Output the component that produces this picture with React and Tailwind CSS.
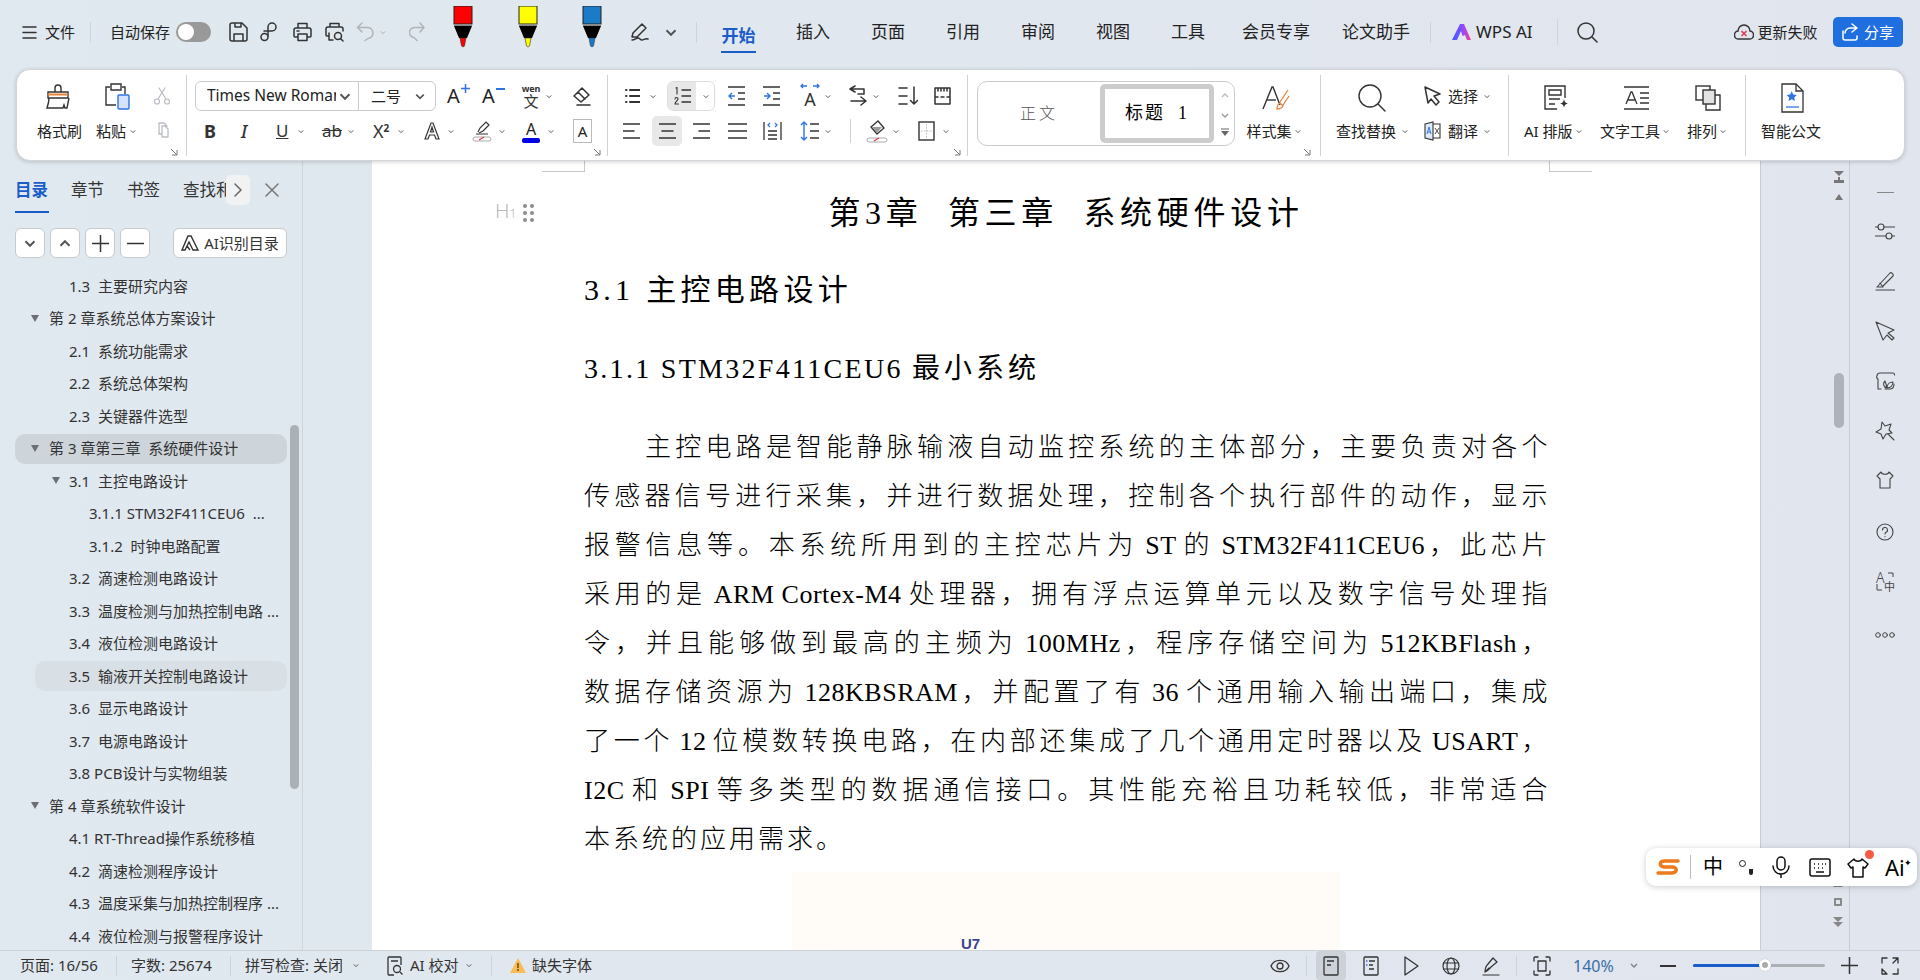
import React from "react";

const S = ({ className = "", children, sw = 1.5, vb = "0 0 24 24", fill = "none" }) => (
  <svg viewBox={vb} fill={fill} stroke="currentColor" strokeWidth={sw} strokeLinecap="round" strokeLinejoin="round" className={"shrink-0 block " + className}>{children}</svg>
);
const Chev = ({ className = "" }) => (
  <svg viewBox="0 0 8 5" fill="none" stroke="#555" strokeWidth="1.3" className={"shrink-0 block w-[8px] h-[5px] " + className}><path d="M1 1l3 3 3-3" /></svg>
);
const Corner = ({ className = "" }) => (
  <svg viewBox="0 0 8 8" fill="none" stroke="#777" strokeWidth="1" className={"absolute w-[8px] h-[8px] " + className}><path d="M1 1l5.5 5.5M2 7h5V2" /></svg>
);
const Sep = ({ className = "" }) => <div className={"w-px bg-[#cfd3d8] shrink-0 " + className} />;

const Marker = ({ c, className = "" }) => (
  <svg viewBox="0 0 22 42" className={"shrink-0 block w-[22px] h-[42px] " + className}>
    <rect x="2" y="0" width="18" height="18" fill={c} stroke="#222" strokeWidth="1" />
    <rect x="2" y="18" width="18" height="2" fill="#888" />
    <path d="M2 20h18l-5 12H7z" fill="#000" />
    <path d="M8 32h6l-1.5 8-1.5 1-1.5-1z" fill={c} stroke="#333" strokeWidth="0.6" />
  </svg>
);

const Row = ({ t, x, tri, triX, sel, hov }) => (
  <div className={"h-[30px] mb-[2.5px] relative flex items-center rounded-[10px] whitespace-pre " + (sel ? "bg-[#cdd5da] " : "") + (hov ? "bg-[#d8e0e6] ml-[20px] " : "") + x}>
    {tri && <span className={"absolute w-0 h-0 border-l-[4px] border-r-[4px] border-t-[7px] border-l-transparent border-r-transparent border-t-[#6b6f73] " + triX} />}
    {t}
  </div>
);

const bodyLines = [
  "传感器信号进行采集，并进行数据处理，控制各个执行部件的动作，显示",
  "报警信息等。本系统所用到的主控芯片为 ST 的 STM32F411CEU6，此芯片",
  "采用的是 ARM Cortex-M4 处理器，拥有浮点运算单元以及数字信号处理指",
  "令，并且能够做到最高的主频为 100MHz，程序存储空间为 512KBFlash，",
  "数据存储资源为 128KBSRAM，并配置了有 36 个通用输入输出端口，集成",
  "了一个 12 位模数转换电路，在内部还集成了几个通用定时器以及 USART，",
  "I2C 和 SPI 等多类型的数据通信接口。其性能充裕且功耗较低，非常适合",
];

export default function App() {
  return (
    <div lang="zh-CN" className="relative w-[1920px] h-[980px] overflow-hidden flex flex-col bg-[linear-gradient(90deg,#e0e9ef,#e1e5ee)] text-[15px] text-[#222] font-['Noto_Sans','Noto_Sans_CJK_SC',sans-serif]">
      {/* top bar */}
      <div className="h-[69px] flex items-center shrink-0 pb-[5px]">
        <S className="w-[15px] h-[15px] ml-[22px] text-[#333]" vb="0 0 15 15"><path d="M1 2h13M1 7.5h13M1 13h13" /></S>
        <span className="ml-[8px]">文件</span>
        <Sep className="h-[21px] ml-[15px]" />
        <span className="ml-[19px]">自动保存</span>
        <div className="ml-[6px] w-[35px] h-[20px] rounded-full bg-[#999] flex items-center pl-[2px]"><div className="w-[16px] h-[16px] rounded-full bg-white" /></div>
        <S className="w-[19px] h-[20px] ml-[18px] text-[#333]" vb="0 0 19 20"><path d="M3 1h10l5 5v11a2 2 0 0 1-2 2H3a2 2 0 0 1-2-2V3a2 2 0 0 1 2-2zM6 1v4h6V1M5 19v-7h9v7" /></S>
        <S className="w-[19px] h-[20px] ml-[12px] text-[#333]" vb="0 0 19 20"><path d="M8 14V5a4 4 0 1 1 4 4H4" /><circle cx="4.500" cy="15" r="3.500" /></S>
        <S className="w-[19px] h-[20px] ml-[14px] text-[#333]" vb="0 0 19 20"><path d="M5 6V1.500h9V6M4 15H2a1 1 0 0 1-1-1V8a2 2 0 0 1 2-2h13a2 2 0 0 1 2 2v6a1 1 0 0 1-1 1h-2M5 12h9v6.500H5zM4 9h2" /></S>
        <S className="w-[19px] h-[20px] ml-[13px] text-[#333]" vb="0 0 19 20"><path d="M5 5V1.500h9V5M4 14H2a1 1 0 0 1-1-1V7a2 2 0 0 1 2-2h13a2 2 0 0 1 2 2v2M4 11v7h4" /><circle cx="13" cy="14" r="3.500" /><path d="M15.500 16.500L18 19" /></S>
        <S className="w-[18px] h-[20px] ml-[12px] text-[#b0b4b9]" vb="0 0 18 20"><path d="M6 1L1.500 5.500 6 10M1.500 5.500H11a5.500 5.500 0 0 1 1 11l-3 2" /></S>
        <Chev className="ml-[5px] opacity-40 scale-75" />
        <S className="w-[16px] h-[20px] ml-[22px] text-[#b0b4b9]" vb="0 0 16 20"><path d="M11 1l4 4.500L11 10M15 5.500H6a5 5 0 0 0-1 10l3 3" /></S>
        <Marker c="#ff0000" className="ml-[27px] mt-[-10px]" />
        <Marker c="#ffff00" className="ml-[43px] mt-[-10px]" />
        <Marker c="#1b7bc9" className="ml-[42px] mt-[-10px]" />
        <S className="w-[20px] h-[20px] ml-[27px] text-[#333]" vb="0 0 20 20"><path d="M2 15l1-4L12 2l4 4-9 9zM2 18c3 0 4-2 6-2s2 2 4 2 3-2 6-1" /></S>
        <Chev className="ml-[17px] scale-150" />
        <Sep className="h-[21px] ml-[21px]" />
        <div className="flex flex-col items-center ml-[24px] w-[35px] h-[48px] relative justify-center">
          <span className="text-[17px] leading-[32px] mt-[9px] font-bold text-[#1a5dc8]">开始</span>
          <div className="h-[2px] w-[35px] bg-[#1a5dc8] mt-[-1px]" />
        </div>
        <span className="text-[17px] ml-[40px] w-[35px] whitespace-nowrap">插入</span>
        <span className="text-[17px] ml-[40px] w-[35px] whitespace-nowrap">页面</span>
        <span className="text-[17px] ml-[40px] w-[35px] whitespace-nowrap">引用</span>
        <span className="text-[17px] ml-[40px] w-[35px] whitespace-nowrap">审阅</span>
        <span className="text-[17px] ml-[40px] w-[35px] whitespace-nowrap">视图</span>
        <span className="text-[17px] ml-[40px] w-[35px] whitespace-nowrap">工具</span>
        <span className="text-[17px] ml-[36px] w-[68px] whitespace-nowrap">会员专享</span>
        <span className="text-[17px] ml-[32px] w-[68px] whitespace-nowrap">论文助手</span>
        <Sep className="h-[21px] ml-[20px]" />
        <svg viewBox="0 0 20 16" className="w-[20px] h-[16px] ml-[20px] shrink-0">
          <defs><linearGradient id="wa" x1="0" x2="1"><stop offset="0" stopColor="#3a5cff" /><stop offset="0.55" stopColor="#8a4cff" /><stop offset="1" stopColor="#ff3b8e" /></linearGradient></defs>
          <path d="M9 0h4l7 16h-4l-2-5-2.500 1L10 7 6 16H1z" fill="url(#wa)" />
        </svg>
        <span className="ml-[5px] text-[17px]">WPS AI</span>
        <Sep className="h-[26px] ml-[24px]" />
        <S className="w-[21px] h-[21px] ml-[19px] text-[#333]" vb="0 0 21 21"><circle cx="9" cy="9" r="8" /><path d="M15 15l5 5" /></S>
        <svg viewBox="0 0 20 18" fill="none" className="w-[20px] h-[18px] ml-[136px] shrink-0"><path d="M5 16a4 4 0 0 1-1-8 6 6 0 0 1 12 0 4 4 0 0 1-1 8z" stroke="#333" strokeWidth="1.500" /><path d="M7.500 8l5 5M12.500 8l-5 5" stroke="#e0384f" strokeWidth="1.500" /></svg>
        <span className="ml-[4px] whitespace-nowrap">更新失败</span>
        <div className="ml-[15px] w-[70px] h-[30px] rounded-[5px] bg-[#1f6fe0] text-white flex items-center justify-center gap-[5px]">
          <S className="w-[18px] h-[18px] text-white" vb="0 0 18 18"><path d="M11 1l5 4-5 4M16 5H9a5 5 0 0 0-5 5v0M2 8v7a2 2 0 0 0 2 2h10a2 2 0 0 0 2-2v-2" /></S>
          <span className="whitespace-nowrap">分享</span>
        </div>
      </div>

      {/* ribbon */}
      <div className="relative z-10 ml-[16px] w-[1889px] h-[92px] shrink-0 bg-white rounded-[14px] border border-[#d2d5d9] shadow-[0_1px_4px_rgba(0,0,0,0.18)] flex pt-[5px] pb-[4px] text-[#222]">
        {/* G1 */}
        <div className="relative w-[169px] shrink-0">
          <div className="flex h-[30px] mt-[6px] items-center">
            <svg viewBox="0 0 26 26" fill="none" className="w-[26px] h-[26px] ml-[28px] shrink-0" stroke="#333" strokeWidth="1.400"><path d="M10 9V5a3 3 0 0 1 6 0v4" /><path d="M3 9h20v6H3z" /><path d="M3 11.500h20" stroke="#e8833a" strokeWidth="2" /><path d="M4 15c0 4-1 7-2 10h16l1-3 1 3h2l2-10" /></svg>
            <svg viewBox="0 0 26 28" fill="none" className="w-[26px] h-[28px] ml-[33px] shrink-0"><path d="M6 5H2v18h10M18 5h3v7" stroke="#333" strokeWidth="1.400" /><path d="M7 2h10v6H7z" stroke="#333" strokeWidth="1.400" /><rect x="14" y="13" width="11" height="14" rx="1" fill="#d4e3fb" stroke="#2f74e0" strokeWidth="1.400" /></svg>
            <S className="w-[18px] h-[18px] ml-[23px] text-[#b9bdc2]" vb="0 0 18 18" sw={1.200}><circle cx="4" cy="14.500" r="2.500" /><circle cx="14" cy="14.500" r="2.500" /><path d="M5 12L12 1M13 12L6 1" /></S>
          </div>
          <div className="flex h-[30px] mt-[5px] items-center">
            <span className="ml-[20px] w-[44px] whitespace-nowrap">格式刷</span>
            <span className="ml-[15px] w-[30px] whitespace-nowrap">粘贴</span>
            <Chev className="ml-[3px] scale-75" />
            <S className="w-[18px] h-[18px] ml-[19px] text-[#b9bdc2]" vb="0 0 18 18" sw={1.300}><path d="M6 4h3l3 3v8H6zM3 1h5l3 3M3 1v11h3" /></S>
          </div>
          <Corner className="right-[8px] bottom-[0px]" />
        </div>
        <Sep />
        {/* G2 */}
        <div className="relative w-[420px] shrink-0">
          <div className="flex h-[30px] mt-[6px] items-center">
            <div className="ml-[8px] w-[241px] h-[30px] rounded-[6px] border border-[#c8cbcf] flex items-center shrink-0">
              <div className="w-[163px] h-full border-r border-[#c8cbcf] flex items-center pl-[11px] shrink-0">
                <span className="w-[129px] overflow-hidden whitespace-nowrap text-[15.500px]">Times New Roman</span>
                <Chev className="ml-[5px] scale-150" />
              </div>
              <span className="ml-[12px] text-[15px] whitespace-nowrap">二号</span>
              <Chev className="ml-[15px] scale-125" />
            </div>
            <div className="relative ml-[11px] text-[20px] leading-[30px] w-[20px] shrink-0">A<svg viewBox="0 0 9 9" className="absolute top-[3px] right-[-3px] w-[9px] h-[9px]" stroke="#2f74e0" strokeWidth="1.500"><path d="M0 4.500h9M4.500 0v9" /></svg></div>
            <div className="relative ml-[15px] text-[20px] leading-[30px] w-[20px] shrink-0">A<svg viewBox="0 0 9 2" className="absolute top-[7px] right-[-3px] w-[9px] h-[2px]" stroke="#2f74e0" strokeWidth="2"><path d="M0 1h9" /></svg></div>
            <div className="ml-[18px] w-[22px] shrink-0 flex flex-col items-center text-[#333]">
              <span className="text-[9px] leading-[10px] font-bold tracking-tight">wen</span>
              <span className="text-[15px] leading-[15px]">文</span>
            </div>
            <Chev className="ml-[3px] scale-75" />
            <S className="w-[20px] h-[20px] ml-[19px] text-[#333]" vb="0 0 20 20"><path d="M2 10l8-8 7 7-8 7zM5 19h13M6 6l7 7" /></S>
          </div>
          <div className="flex h-[30px] mt-[5px] items-center">
            <span className="ml-[17px] w-[12px] font-bold text-[18px] text-[#333]">B</span>
            <span className="ml-[22px] w-[12px] italic text-[18px] text-[#333] text-center font-medium">I</span>
            <span className="ml-[26px] w-[12px] underline text-[17px] text-[#333]">U</span>
            <Chev className="ml-[9px] scale-75" />
            <span className="ml-[17px] w-[18px] line-through text-[17px] text-[#333]">ab</span>
            <Chev className="ml-[7px] scale-75" />
            <span className="ml-[18px] w-[19px] text-[18px] text-[#333] whitespace-nowrap">X<span className="text-[10px] font-bold align-[6px]">2</span></span>
            <Chev className="ml-[5px] scale-75" />
            <svg viewBox="0 0 16 20" className="w-[16px] h-[20px] ml-[19px] shrink-0" fill="none" stroke="#333" strokeWidth="1.200"><path d="M1 18L7 2h2l6 16h-3l-1.500-4h-5L4 18zM6.500 11L8 6l1.500 5z" /></svg>
            <Chev className="ml-[7px] scale-75" />
            <svg viewBox="0 0 20 22" fill="none" className="w-[20px] h-[22px] ml-[17px] shrink-0"><path d="M6 12l2-4 6-6 3 3-6 6-4 2" stroke="#333" strokeWidth="1.200" /><path d="M4 14h12" stroke="#333" /><rect x="1" y="17" width="18" height="4" rx="2" stroke="#aaa" /><path d="M7 20l5-3" stroke="#e0384f" strokeWidth="1.200" /></svg>
            <Chev className="ml-[6px] scale-75" />
            <div className="ml-[16px] w-[18px] flex flex-col items-center shrink-0">
              <span className="text-[16px] leading-[18px] text-[#222]">A</span>
              <div className="w-[18px] h-[5px] rounded-[2px] bg-[#0000e6]" />
            </div>
            <Chev className="ml-[7px] scale-75" />
            <div className="ml-[18px] w-[19px] h-[24px] border border-[#bbb] flex items-center justify-center text-[15px] shrink-0">A</div>
          </div>
          <Corner className="right-[6px] bottom-[0px]" />
        </div>
        <Sep />
        {/* G3 */}
        <div className="relative w-[359px] shrink-0 text-[#333]">
          <div className="flex h-[30px] mt-[6px] items-center">
            <S className="w-[15px] h-[16px] ml-[17px]" vb="0 0 15 16"><path d="M5 2h10M5 8h10M5 14h10M1 2h.5M1 8h.5M1 14h.5" strokeWidth="2" /></S>
            <Chev className="ml-[9px] scale-75" />
            <div className="ml-[10px] w-[48px] h-[30px] rounded-[6px] border border-[#dcdcdc] flex items-center shrink-0 overflow-hidden">
              <div className="w-[28px] h-full bg-[#e8e8e8] flex items-center justify-center"><S className="w-[17px] h-[18px]" vb="0 0 17 18"><path d="M8 3h9M8 9h9M8 15h9" /><path d="M2 1l1-.5V7M1 12a1.500 1.500 0 0 1 3 0c0 1.500-3 2.500-3 5h3.500" strokeWidth="1.100" /></S></div>
              <Chev className="ml-[6px] scale-75" />
            </div>
            <svg viewBox="0 0 17 20" fill="none" className="w-[17px] h-[20px] ml-[13px] shrink-0"><path d="M0 1h17M0 19h17M10 7h7M10 13h7" stroke="#333" strokeWidth="1.400" /><path d="M7 10H1M4 7l-3 3 3 3" stroke="#2f74e0" strokeWidth="1.400" /></svg>
            <svg viewBox="0 0 17 20" fill="none" className="w-[17px] h-[20px] ml-[18px] shrink-0"><path d="M0 1h17M0 19h17M10 7h7M10 13h7" stroke="#333" strokeWidth="1.400" /><path d="M1 10h6M4 7l3 3-3 3" stroke="#2f74e0" strokeWidth="1.400" /></svg>
            <div className="ml-[20px] w-[20px] relative h-[26px] shrink-0 flex items-end justify-center text-[18px] leading-[19px]">
              A
              <svg viewBox="0 0 20 6" fill="none" className="absolute top-0 left-0 w-[20px] h-[6px]" stroke="#2f74e0" strokeWidth="1.300"><path d="M1 3h6M3 1L1 3l2 2M13 3h6M17 1l2 2-2 2" /></svg>
            </div>
            <Chev className="ml-[4px] scale-75" />
            <S className="w-[19px] h-[22px] ml-[17px]" vb="0 0 19 22"><path d="M1 4h14M6 1L1 4l5 3M2 16h15M12 12l5 4-5 4M15 4v5H9" /></S>
            <Chev className="ml-[4px] scale-75" />
            <S className="w-[20px] h-[20px] ml-[18px]" vb="0 0 20 20"><path d="M1 2h8M1 10h8M1 18h8M16 1v17M12.500 14.500L16 18l3.500-3.500" /></S>
            <S className="w-[17px] h-[18px] ml-[16px]" vb="0 0 17 18"><path d="M1 1h15M1 1v16h15V1M4 1v3M7 1v3M10 1v3M13 1v3M1 10h3M7 10h3M13 10h3" /></S>
          </div>
          <div className="flex h-[30px] mt-[5px] items-center">
            <S className="w-[17px] h-[16px] ml-[15px]" vb="0 0 17 16"><path d="M0 1h17M0 8h11M0 15h17" /></S>
            <div className="ml-[12px] w-[30px] h-[30px] rounded-[5px] bg-[#e8e8e8] flex items-center justify-center shrink-0"><S className="w-[17px] h-[16px]" vb="0 0 17 16"><path d="M0 1h17M3 8h11M0 15h17" /></S></div>
            <S className="w-[17px] h-[16px] ml-[11px]" vb="0 0 17 16"><path d="M0 1h17M6 8h11M0 15h17" /></S>
            <S className="w-[19px] h-[16px] ml-[18px]" vb="0 0 19 16"><path d="M0 1h19M0 8h19M0 15h19" /></S>
            <svg viewBox="0 0 19 20" fill="none" className="w-[19px] h-[20px] ml-[16px] shrink-0" strokeWidth="1.300"><path d="M1 1v18M18 1v18M5 10h9M5 14h9M5 18h9" stroke="#333" /><path d="M7 2L5 4l2 2M12 2l2 2-2 2" stroke="#2f74e0" /></svg>
            <svg viewBox="0 0 20 20" fill="none" className="w-[20px] h-[20px] ml-[18px] shrink-0" strokeWidth="1.400"><path d="M4 1v18M1 4l3-3 3 3M1 16l3 3 3-3" stroke="#2f74e0" /><path d="M10 3h9M10 10h9M10 17h9" stroke="#333" /></svg>
            <Chev className="ml-[4px] scale-75" />
            <Sep className="h-[24px] ml-[18px]" />
            <svg viewBox="0 0 22 24" fill="none" className="w-[22px] h-[24px] ml-[15px] shrink-0"><path d="M5 8l7-6 6 7-7 6z" stroke="#333" strokeWidth="1.300" /><path d="M6 8h10l-5 6z" fill="#999" /><rect x="1" y="19" width="20" height="4" rx="2" stroke="#aaa" /><path d="M8 22l5-3" stroke="#e0384f" strokeWidth="1.200" /></svg>
            <Chev className="ml-[4px] scale-75" />
            <svg viewBox="0 0 17 20" fill="none" className="w-[17px] h-[20px] ml-[18px] shrink-0"><rect x="1" y="1" width="15" height="18" stroke="#333" strokeWidth="1.400" /><path d="M8.500 3v14M3 10h11" stroke="#bbb" strokeDasharray="1.500 1.500" /></svg>
            <Chev className="ml-[7px] scale-75" />
          </div>
          <Corner className="right-[6px] bottom-[0px]" />
        </div>
        <Sep />
        {/* G4 */}
        <div className="relative w-[352px] shrink-0 flex">
          <div className="ml-[9px] mt-[6px] w-[258px] h-[65px] rounded-[10px] border border-[#c8cbcf] flex items-center shrink-0 font-['Liberation_Serif','Noto_Sans_CJK_SC',serif]">
            <span className="w-[122px] text-center text-[16px] font-light text-[#555] tracking-[3px]">正文</span>
            <div className="w-[114px] h-[59px] rounded-[5px] border-[5px] border-[#cccccc] flex items-center justify-center text-[18px] whitespace-pre tracking-[2px] text-black shrink-0">标题  1</div>
            <div className="flex flex-col items-center ml-[6px] gap-[9px] pt-[1px] w-[10px]">
              <Chev className="rotate-180 opacity-40" />
              <Chev className="opacity-60 mt-[6px]" />
              <svg viewBox="0 0 8 8" className="w-[8px] h-[8px] mt-[1px]"><path d="M0 1h8" stroke="#666" /><path d="M0 3h8L4 8z" fill="#666" /></svg>
            </div>
          </div>
          <div className="ml-[9px] w-[60px] flex flex-col items-center shrink-0">
            <svg viewBox="0 0 28 26" fill="none" className="w-[28px] h-[26px] mt-[10px] ml-[3px] shrink-0"><path d="M1 24L10 2h1l7 18" stroke="#333" strokeWidth="1.400" /><path d="M5 15h9" stroke="#333" strokeWidth="1.400" /><path d="M15 24c0-3 1-5 3-6l3 3c-1 2-3 3-6 3zM18 17l8-12M21 20l6-9" stroke="#e8833a" strokeWidth="1.300" /></svg>
            <div className="flex items-center h-[30px] mt-[5px]"><span className="whitespace-nowrap">样式集</span><Chev className="ml-[2px] scale-75" /></div>
          </div>
          <Corner className="right-[9px] bottom-[0px]" />
        </div>
        <Sep />
        {/* G5 */}
        <div className="w-[187px] shrink-0 flex">
          <div className="ml-[15px] w-[74px] flex flex-col items-center shrink-0">
            <S className="w-[28px] h-[28px] mt-[9px] text-[#333] ml-[-3px]" vb="0 0 28 28" sw={1.400}><circle cx="12" cy="12" r="11" /><path d="M20 20l7 7" /></S>
            <div className="flex items-center h-[30px] mt-[4px] self-start"><span className="whitespace-nowrap">查找替换</span><Chev className="ml-[5px] scale-75" /></div>
          </div>
          <div className="ml-[14px] flex flex-col shrink-0">
            <div className="flex items-center h-[30px] mt-[6px]">
              <S className="w-[17px] h-[20px] text-[#333]" vb="0 0 17 20"><path d="M1 1l15 7-6 2 5 6-3 3-5-6-3 4z" /></S>
              <span className="ml-[7px] whitespace-nowrap">选择</span><Chev className="ml-[5px] scale-75" />
            </div>
            <div className="flex items-center h-[30px] mt-[5px]">
              <svg viewBox="0 0 17 20" fill="none" className="w-[17px] h-[20px] shrink-0"><path d="M1 3l8-2v18l-8-2z" fill="#dfeafc" stroke="#333" strokeWidth="1.100" /><path d="M9 3h7v14H9" stroke="#333" strokeWidth="1.100" /><path d="M3 13l2-7 2 7M3.800 11h2.500" stroke="#2f74e0" /><path d="M11 7l4 6M15 7l-4 6" stroke="#555" /></svg>
              <span className="ml-[7px] whitespace-nowrap">翻译</span><Chev className="ml-[5px] scale-75" />
            </div>
          </div>
        </div>
        <Sep />
        {/* G6 */}
        <div className="w-[236px] shrink-0 flex">
          <div className="ml-[15px] w-[64px] flex flex-col shrink-0">
            <svg viewBox="0 0 26 28" fill="none" className="w-[26px] h-[28px] mt-[9px] ml-[19px] shrink-0" stroke="#333" strokeWidth="1.400"><path d="M14 25H2V2h20v12" /><path d="M6 6h12v5H6zM6 15h11M6 20h6" /><path d="M21 15c.5 3 1.500 4 4 4.500-2.500.5-3.500 1.500-4 4-.5-2.500-1.500-3.500-4-4 2.500-.5 3.500-1.500 4-4.500z" fill="#333" stroke="none" /></svg>
            <div className="flex items-center h-[30px] mt-[4px]"><span className="whitespace-nowrap">AI 排版</span><Chev className="ml-[2px] scale-75" /></div>
          </div>
          <div className="ml-[12px] w-[67px] flex flex-col shrink-0">
            <svg viewBox="0 0 27 24" fill="none" className="w-[27px] h-[24px] mt-[11px] ml-[23px] shrink-0" stroke="#333" strokeWidth="1.300"><path d="M1 1h25M1 23h25M3 18l5-12h1l5 12M5 14h7M17 7h9M17 12h9M17 17h9" /></svg>
            <div className="flex items-center h-[30px] mt-[6px]"><span className="whitespace-nowrap">文字工具</span><Chev className="ml-[2px] scale-75" /></div>
          </div>
          <div className="ml-[20px] w-[40px] flex flex-col shrink-0">
            <svg viewBox="0 0 26 26" fill="none" className="w-[26px] h-[26px] mt-[10px] ml-[8px] shrink-0" stroke="#333" strokeWidth="1.400"><rect x="1" y="1" width="14" height="14" /><rect x="8" y="5" width="12" height="14" fill="#e2e2e2" /><path d="M20 10h5v15H11v-6" /></svg>
            <div className="flex items-center h-[30px] mt-[5px]"><span className="whitespace-nowrap">排列</span><Chev className="ml-[2px] scale-75" /></div>
          </div>
        </div>
        <Sep />
        {/* G7 */}
        <div className="ml-[15px] w-[60px] flex flex-col shrink-0">
          <svg viewBox="0 0 24 30" fill="none" className="w-[24px] h-[30px] mt-[8px] ml-[19px] shrink-0"><path d="M2 1h14l7 7v21H2z" stroke="#333" strokeWidth="1.300" /><path d="M16 1v7h7" stroke="#333" strokeWidth="1.300" /><path d="M12 8l1.800 3.800 4.200.5-3 2.900.8 4.100-3.800-2-3.800 2 .8-4.100-3-2.900 4.200-.5z" fill="#2f74e0" transform="translate(1.500 1.500) scale(.85)" /><path d="M6 24h13" stroke="#2f74e0" strokeWidth="1.300" /></svg>
          <div className="flex items-center h-[30px] mt-[3px]"><span className="whitespace-nowrap">智能公文</span></div>
        </div>
      </div>

      {/* body */}
      <div className="flex flex-1 min-h-0">
        {/* sidebar */}
        <div className="relative w-[303px] shrink-0 border-r border-[#cfd5da] text-[#333]">
          <div className="flex items-center h-[46px] mt-[6px] ml-[15px] text-[16.500px] relative">
            <div className="w-[34px] relative h-[46px] flex items-center shrink-0">
              <span className="font-bold text-[#1a5dc8] whitespace-nowrap">目录</span>
              <div className="absolute bottom-0 left-0 w-[34px] h-[2px] bg-[#1a5dc8]" />
            </div>
            <span className="ml-[22px] w-[34px] whitespace-nowrap">章节</span>
            <span className="ml-[22px] w-[34px] whitespace-nowrap">书签</span>
            <span className="ml-[22px] w-[43px] overflow-hidden whitespace-nowrap">查找和</span>
            <div className="w-[24px] h-[30px] rounded-[5px] bg-[#f0f2f4] flex items-center justify-center shrink-0">
              <S className="w-[10px] h-[14px] text-[#666]" vb="0 0 10 14"><path d="M2 1l6 6-6 6" /></S>
            </div>
            <S className="w-[14px] h-[14px] ml-[15px] text-[#777]" vb="0 0 14 14"><path d="M1 1l12 12M13 1L1 13" /></S>
          </div>
          <div className="flex items-center mt-[15px] ml-[15px] h-[30px]">
            <div className="w-[30px] h-[30px] rounded-[6px] bg-white border border-[#c6cbd0] flex items-center justify-center shrink-0"><Chev className="scale-[1.500]" /></div>
            <div className="ml-[5px] w-[30px] h-[30px] rounded-[6px] bg-white border border-[#c6cbd0] flex items-center justify-center shrink-0"><Chev className="scale-[1.500] rotate-180" /></div>
            <div className="ml-[5px] w-[30px] h-[30px] rounded-[6px] bg-white border border-[#c6cbd0] flex items-center justify-center shrink-0"><S className="w-[17px] h-[17px] text-[#333]" vb="0 0 17 17"><path d="M0 8.500h17M8.500 0v17" /></S></div>
            <div className="ml-[5px] w-[30px] h-[30px] rounded-[6px] bg-white border border-[#c6cbd0] flex items-center justify-center shrink-0"><S className="w-[17px] h-[17px] text-[#333]" vb="0 0 17 17"><path d="M0 8.500h17" /></S></div>
            <div className="ml-[23px] w-[114px] h-[30px] rounded-[6px] bg-white border border-[#c6cbd0] flex items-center justify-center gap-[5px] shrink-0">
              <svg viewBox="0 0 18 16" fill="none" stroke="#333" strokeWidth="1.400" className="w-[18px] h-[16px] shrink-0"><path d="M1 15L7 1h3l7 14h-5L8 7l-4 8zM6 11l3 4" /></svg>
              <span className="whitespace-nowrap">AI识别目录</span>
            </div>
          </div>
          <div className="mt-[13px] mx-[15px] w-[272px] overflow-hidden h-[686px]">
            <Row t="1.3  主要研究内容" x="pl-[54px]" />
            <Row t="第 2 章系统总体方案设计" x="pl-[34px]" tri triX="left-[16px] top-[11px]" />
            <Row t="2.1  系统功能需求" x="pl-[54px]" />
            <Row t="2.2  系统总体架构" x="pl-[54px]" />
            <Row t="2.3  关键器件选型" x="pl-[54px]" />
            <Row t="第 3 章第三章  系统硬件设计" x="pl-[34px]" tri triX="left-[16px] top-[11px]" sel />
            <Row t="3.1  主控电路设计" x="pl-[54px]" tri triX="left-[37px] top-[11px]" />
            <Row t="3.1.1 STM32F411CEU6  ..." x="pl-[74px]" />
            <Row t="3.1.2  时钟电路配置" x="pl-[74px]" />
            <Row t="3.2  滴速检测电路设计" x="pl-[54px]" />
            <Row t="3.3  温度检测与加热控制电路 ..." x="pl-[54px]" />
            <Row t="3.4  液位检测电路设计" x="pl-[54px]" />
            <Row t="3.5  输液开关控制电路设计" x="pl-[34px]" hov />
            <Row t="3.6  显示电路设计" x="pl-[54px]" />
            <Row t="3.7  电源电路设计" x="pl-[54px]" />
            <Row t="3.8 PCB设计与实物组装" x="pl-[54px]" />
            <Row t="第 4 章系统软件设计" x="pl-[34px]" tri triX="left-[16px] top-[11px]" />
            <Row t="4.1 RT-Thread操作系统移植" x="pl-[54px]" />
            <Row t="4.2  滴速检测程序设计" x="pl-[54px]" />
            <Row t="4.3  温度采集与加热控制程序 ..." x="pl-[54px]" />
            <Row t="4.4  液位检测与报警程序设计" x="pl-[54px]" />
          </div>
          <div className="absolute left-[290px] top-[264px] w-[9px] h-[364px] rounded-full bg-[#aab2b6]" />
        </div>
        {/* gutter */}
        <div className="w-[69px] shrink-0" />
        {/* page */}
        <div className="relative w-[1389px] shrink-0 bg-white overflow-hidden border-r border-[#c8ccd2] text-black font-['Liberation_Serif','Noto_Sans_CJK_SC',serif]">
          <div className="absolute left-[212px] top-0 w-px h-[10px] bg-[#c8c8c8]" />
          <div className="absolute left-[170px] top-[10px] w-[43px] h-px bg-[#c8c8c8]" />
          <div className="absolute left-[1177px] top-0 w-px h-[10px] bg-[#c8c8c8]" />
          <div className="absolute left-[1177px] top-[10px] w-[43px] h-px bg-[#c8c8c8]" />
          <div className="absolute left-[123px] top-[37px] flex items-center gap-[7px] text-[#b8b8b8] font-['Noto_Sans',sans-serif]">
            <span className="text-[20px] leading-[26px] font-light">H<span className="text-[12px]">1</span></span>
            <svg viewBox="0 0 11 18" className="w-[11px] h-[18px]" fill="#8c8c8c"><circle cx="2" cy="2" r="2" /><circle cx="9" cy="2" r="2" /><circle cx="2" cy="9" r="2" /><circle cx="9" cy="9" r="2" /><circle cx="2" cy="16" r="2" /><circle cx="9" cy="16" r="2" /></svg>
          </div>
          <div className="ml-[212px] w-[964px] pt-[26px]">
            <div className="h-[52px] leading-[52px] text-center text-[32px] tracking-[4.700px] whitespace-pre">第3章  第三章  系统硬件设计</div>
            <div className="mt-[29px] h-[44px] leading-[44px] text-[30px] tracking-[4.300px] whitespace-pre">3.1 主控电路设计</div>
            <div className="mt-[37px] h-[40px] leading-[40px] text-[28px] tracking-[2.300px] whitespace-pre">3.1.1 STM32F411CEU6 <span className="tracking-[4px]">最小系统</span></div>
            <div className="mt-[34px] text-[26px] font-light leading-[49px] tracking-[0.500px] [word-spacing:-4px]">
              <div className="h-[49px] pl-[61px] text-justify [text-align-last:justify]">主控电路是智能静脉输液自动监控系统的主体部分，主要负责对各个</div>
              {bodyLines.map((l) => (
                <div key={l} className="h-[49px] text-justify [text-align-last:justify]">{l}</div>
              ))}
              <div className="h-[49px] tracking-[3px]">本系统的应用需求。</div>
            </div>
            <div className="mt-[8px] ml-[208px] w-[548px] h-[100px] bg-[#fffcf8] pl-[169px] pt-[62px]">
              <span className="text-[15px] font-bold leading-[20px] text-[#3d4390] font-['Liberation_Sans',sans-serif] block">U7</span>
            </div>
          </div>
        </div>
        {/* scroll rail */}
        <div className="relative w-[89px] shrink-0 border-r border-[#c8ccd2] flex flex-col items-center text-[#777]">
          <svg viewBox="0 0 10 12" className="w-[10px] h-[12px] mt-[10px] ml-[67px] shrink-0" fill="#777"><path d="M0 0h10L5 5zM0 9h10v3H0z" /><path d="M4 6h2v3H4z" /></svg>
          <svg viewBox="0 0 8 6" className="w-[8px] h-[6px] mt-[11px] ml-[67px] shrink-0" fill="#777"><path d="M4 0l4 6H0z" /></svg>
          <div className="mt-[173px] ml-[67px] w-[10px] h-[55px] rounded-full bg-[#adb3bd] shrink-0" />
          <svg viewBox="0 0 10 10" className="w-[10px] h-[10px] mt-[450px] ml-[65px] shrink-0" fill="#888"><path d="M5 0l5 4H0zM5 4l5 5H0z" /></svg>
          <div className="w-[8px] h-[8px] mt-[10px] ml-[65px] rounded-[1px] border-2 border-[#888] shrink-0" />
          <svg viewBox="0 0 10 10" className="w-[10px] h-[10px] mt-[11px] ml-[65px] shrink-0" fill="#888"><path d="M0 0h10L5 5zM0 5h10L5 10z" /></svg>
        </div>
        {/* right rail */}
        <div className="flex-1 flex flex-col items-center text-[#444]">
          <div className="w-[17px] h-px bg-[#888] mt-[31px] shrink-0" />
          <S className="w-[20px] h-[18px] mt-[30px]" vb="0 0 20 18" sw={1.100}><path d="M0 4h3M9 4h11M0 13h11M17 13h3" /><circle cx="6" cy="4" r="3" /><circle cx="14" cy="13" r="3" /></S>
          <S className="w-[20px] h-[20px] mt-[30px]" vb="0 0 20 20" sw={1.100}><path d="M1 19h19M2 16L15 2c1-1 4 1 3 3L7 16z" /><path d="M5 12l3 4" /></S>
          <S className="w-[20px] h-[20px] mt-[30px]" vb="0 0 20 20" sw={1.100}><path d="M1 1l18 8-6 3 6 5-2 2-5-5-4 5z" /></S>
          <S className="w-[19px] h-[18px] mt-[31px]" vb="0 0 19 18" sw={1.100}><path d="M5 17H2V7a2 2 0 0 1-1-3c0-2 1-3 3-3h13c1 0 1.500 1 1.500 2M9 17h5c3 0 4-2 4-5" /><path d="M10 16c-3-2-3-5-1-7 1 2 2 4 1 7zM11 16c0-3 2-6 6-6 0 3-2 6-6 6z" /></S>
          <S className="w-[20px] h-[20px] mt-[31px]" vb="0 0 20 20" sw={1.100}><path d="M7 1l3 4 6-2-2 6 3 3-6 1-3 5-2-5-5-2 5-3zM13 13l6 6" /></S>
          <S className="w-[18px] h-[18px] mt-[30px]" vb="0 0 18 18" sw={1.100}><path d="M5 1L1 5l3 3v1h0v8h10V8l3-3-4-4c-1 3-7 3-8 0z" /></S>
          <S className="w-[18px] h-[18px] mt-[34px]" vb="0 0 18 18" sw={1.100}><circle cx="9" cy="9" r="8" /><path d="M6.500 7a2.500 2.500 0 1 1 3.500 2.300c-.7.3-1 .8-1 1.700M9 13.500v.2" /></S>
          <div className="w-[20px] h-[20px] mt-[31px] relative text-[14px] leading-[14px] shrink-0">
            <span className="absolute left-[1px] top-[-1px] font-light">A</span>
            <span className="absolute right-[0px] bottom-[0px] text-[11px] leading-[11px]">中</span>
            <svg viewBox="0 0 20 20" fill="none" stroke="#444" className="absolute inset-0 w-[20px] h-[20px]"><path d="M13 1h5v4M2 12v6h5" /></svg>
          </div>
          <S className="w-[20px] h-[6px] mt-[40px]" vb="0 0 20 6" sw={1}><circle cx="3" cy="3" r="2.300" /><circle cx="10" cy="3" r="2.300" /><circle cx="17" cy="3" r="2.300" /></S>
        </div>
      </div>

      {/* status bar */}
      <div className="h-[30px] shrink-0 border-t border-[#cdd2d7] flex items-center text-[#333] relative z-10 whitespace-nowrap">
        <span className="ml-[20px] w-[80px]">页面: 16/56</span>
        <Sep className="h-[20px] ml-[16px]" />
        <span className="ml-[14px] w-[84px]">字数: 25674</span>
        <Sep className="h-[20px] ml-[15px]" />
        <span className="ml-[14px] w-[98px]">拼写检查: 关闭</span>
        <Chev className="ml-[9px] scale-75" />
        <svg viewBox="0 0 16 20" fill="none" stroke="#333" strokeWidth="1.300" className="w-[16px] h-[20px] ml-[27px] shrink-0"><path d="M7 19H2a1 1 0 0 1-1-1V2a1 1 0 0 1 1-1h11a1 1 0 0 1 1 1v7M4 5h7" /><circle cx="10" cy="13" r="3.500" /><path d="M13 16l2.500 2.500" /></svg>
        <span className="ml-[7px] w-[50px]">AI 校对</span>
        <Chev className="ml-[5px] scale-75" />
        <Sep className="h-[20px] ml-[18px]" />
        <svg viewBox="0 0 16 15" className="w-[16px] h-[15px] ml-[18px] shrink-0"><path d="M8 0l8 15H0z" fill="#f8bb55" /><path d="M7.200 5h1.600v5H7.200zM7.200 11h1.600v2H7.200z" fill="#7a5010" /></svg>
        <span className="ml-[6px] w-[60px]">缺失字体</span>
        <svg viewBox="0 0 20 14" fill="none" stroke="#333" strokeWidth="1.300" className="w-[20px] h-[14px] ml-[678px] shrink-0"><path d="M1 7c3-7.500 15-7.500 18 0-3 7.500-15 7.500-18 0z" /><circle cx="10" cy="7" r="3" /></svg>
        <Sep className="h-[20px] ml-[16px]" />
        <div className="ml-[9px] w-[30px] h-[29px] bg-[#cdd2d8] rounded-[4px] flex items-center justify-center shrink-0">
          <svg viewBox="0 0 16 20" fill="none" stroke="#333" strokeWidth="1.300" className="w-[16px] h-[20px]"><rect x="1" y="1" width="14" height="18" rx="1" /><path d="M4 5h7M4 9h4" /></svg>
        </div>
        <svg viewBox="0 0 16 20" fill="none" strokeWidth="1.300" className="w-[16px] h-[20px] ml-[17px] shrink-0"><rect x="1" y="1" width="14" height="18" rx="1" stroke="#333" /><path d="M6 5h6M6 9h4M6 13h5" stroke="#333" /><path d="M3 5h1.500M3 9h1.500" stroke="#2f74e0" /></svg>
        <S className="w-[15px] h-[20px] ml-[25px] text-[#333]" vb="0 0 15 20" sw={1.300}><path d="M1 1l13 9-13 9z" /></S>
        <S className="w-[18px] h-[18px] ml-[23px] text-[#333]" vb="0 0 18 18" sw={1.200}><circle cx="9" cy="9" r="8" /><ellipse cx="9" cy="9" rx="4" ry="8" /><path d="M1.500 6h15M1.500 12h15" /></S>
        <S className="w-[18px] h-[20px] ml-[22px] text-[#333]" vb="0 0 18 20" sw={1.200}><path d="M1 19h16M3 16c0-4 1-6 3-8l5-6 4 4-6 5c-2 2-3 4-6 5zM3 16l4-4" /></S>
        <Sep className="h-[20px] ml-[16px]" />
        <S className="w-[18px] h-[20px] ml-[16px] text-[#333]" vb="0 0 18 20" sw={1.300}><path d="M1 5V2a1 1 0 0 1 1-1h3M13 1h3a1 1 0 0 1 1 1v3M17 15v3a1 1 0 0 1-1 1h-3M5 19H2a1 1 0 0 1-1-1v-3" /><rect x="5" y="5" width="8" height="10" /></S>
        <span className="ml-[22px] w-[40px] text-[#3a6ea8] text-[16px]">140%</span>
        <Chev className="ml-[17px] opacity-70" />
        <div className="ml-[22px] w-[16px] h-[2px] bg-[#333] shrink-0" />
        <div className="ml-[17px] w-[132px] h-[3px] rounded bg-[#adb1b6] relative shrink-0">
          <div className="absolute left-0 top-0 w-[72px] h-[3px] bg-[#1a5dc8] rounded" />
          <div className="absolute left-[66px] top-[-5px] w-[12px] h-[12px] rounded-full bg-white flex items-center justify-center shadow-[0_0_1px_rgba(0,0,0,0.3)]"><div className="w-[6px] h-[6px] rounded-full bg-[#aaa]" /></div>
        </div>
        <S className="w-[17px] h-[17px] ml-[16px] text-[#333]" vb="0 0 17 17"><path d="M0 8.500h17M8.500 0v17" /></S>
        <S className="w-[18px] h-[18px] ml-[23px] text-[#333]" vb="0 0 18 18" sw={1.300}><path d="M1 6V1h5M17 12v5h-5M12 1h5v5M12 6l5-5M1 12l5 5M1 17v-5M1 17h5" /></S>
      </div>

      {/* IME bar */}
      <div className="absolute z-20 left-[1646px] top-[848px] w-[271px] h-[38px] bg-white rounded-[10px] shadow-[0_1px_6px_rgba(0,0,0,0.2)] flex items-center text-black">
        <svg viewBox="0 0 24 18" className="w-[24px] h-[18px] ml-[10px] shrink-0" fill="none" stroke="#ed7a1c" strokeWidth="3.500" strokeLinecap="round"><path d="M22 3H9C3 3 3 8 8 9h9c5 1 4 6-2 6H2" /></svg>
        <div className="w-px h-[24px] bg-[#bbb] ml-[10px] shrink-0" />
        <span className="ml-[12px] text-[20px] leading-[24px] shrink-0">中</span>
        <div className="ml-[16px] relative w-[14px] h-[18px] shrink-0">
          <div className="absolute left-0 top-[2px] w-[7px] h-[7px] rounded-full border border-[#222]" />
          <div className="absolute right-0 top-[11px] w-[4px] h-[6px] rounded-b-full bg-[#222]" />
        </div>
        <S className="w-[18px] h-[22px] ml-[19px] text-[#111]" vb="0 0 18 22" sw={1.500}><rect x="5" y="1" width="8" height="13" rx="4" /><path d="M1 10a8 8 0 0 0 16 0M9 18v4" /></S>
        <svg viewBox="0 0 22 19" fill="none" className="w-[22px] h-[19px] ml-[19px] shrink-0" stroke="#111" strokeWidth="1.500"><rect x="1" y="1" width="20" height="17" rx="2" /><path d="M5 6h1M9 6h1M13 6h1M16 6h1M5 10h1M9 10h1M13 10h1M7 14h8" /></svg>
        <div className="relative ml-[16px] w-[22px] h-[22px] shrink-0">
          <S className="w-[22px] h-[20px] mt-[2px] text-[#111]" vb="0 0 22 20" sw={1.500}><path d="M7 1L1 6l3 4 2-1v10h10V9l2 1 3-4-6-5c-1 3-7 3-8 0z" /></S>
          <div className="absolute right-[-5px] top-[-6px] w-[9px] h-[9px] rounded-full bg-[#f55a43]" />
        </div>
        <span className="ml-[16px] text-[22px] leading-[24px] relative shrink-0">Ai<span className="absolute right-[-7px] top-[-4px] text-[9px]">✦</span></span>
      </div>
    </div>
  );
}
